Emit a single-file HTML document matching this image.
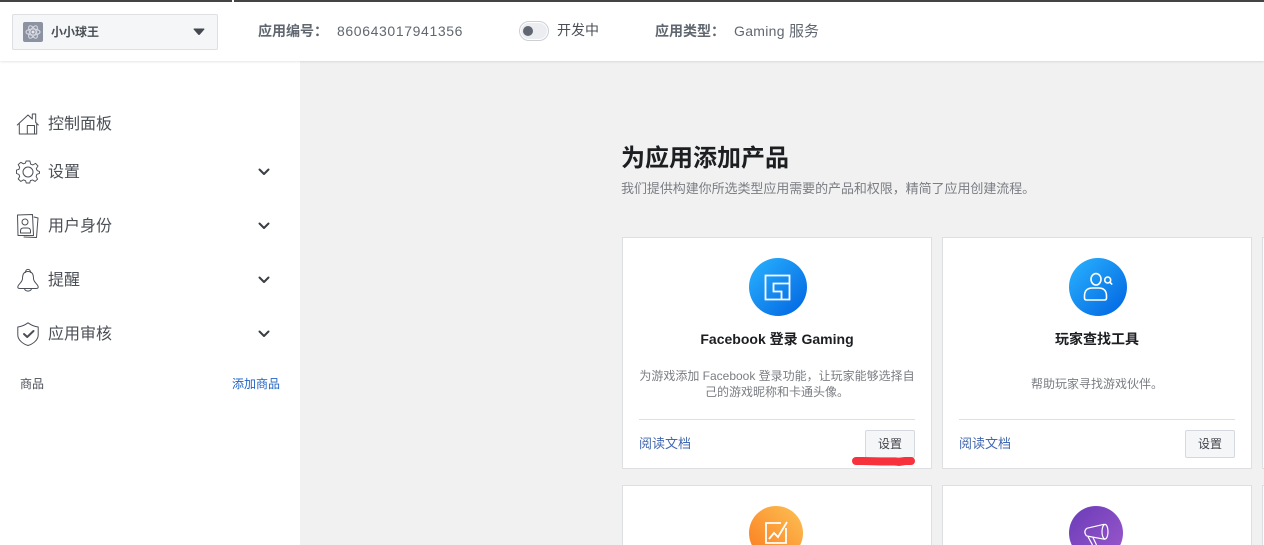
<!DOCTYPE html>
<html lang="zh">
<head>
<meta charset="utf-8">
<title>为应用添加产品</title>
<style>
html,body{margin:0;padding:0;width:1264px;height:545px;overflow:hidden;background:#f1f1f1;font-family:"Liberation Sans","Noto Sans CJK SC",sans-serif;color:#4b4f56}
#wrap{position:relative;width:1264px;height:545px;overflow:hidden;background:#f1f1f1}
.a{position:absolute;white-space:nowrap}
svg{display:block;overflow:visible}
#side{left:0;top:0;width:300px;height:545px;background:#fff}
#hdr{left:0;top:0;width:1264px;height:61px;background:#fff;box-shadow:0 1px 2px rgba(0,0,0,.1)}
.nav{left:48px;font-size:16px;line-height:20px;color:#4b4f56}
.card{position:absolute;box-sizing:border-box;width:310px;background:#fff;border:1px solid #dddfe2}
.card.cut{height:60px;border-bottom:0}
.btn{box-sizing:border-box;width:50px;height:28px;background:#f5f6f7;border:1px solid #d5d8de;border-radius:2px;font-size:12px;line-height:26px;text-align:center;color:#3f4349}
.doc{font-size:13px;line-height:16px;color:#4267b2}
.rule{height:1px;background:#dddfe2;width:276px}
.ttl{font-size:14px;font-weight:bold;line-height:18px;color:#1c1e21;text-align:center}
.desc{font-size:12px;line-height:16px;color:#7a7d83;text-align:center}
.ic{fill:none;stroke:#4b4f56;stroke-width:1;stroke-linecap:round;stroke-linejoin:round}
.chev{fill:none;stroke:#3a3d42;stroke-width:2;stroke-linecap:round;stroke-linejoin:round}
</style>
</head>
<body>
<div id="wrap">
<div class="a" id="side"></div>
<div class="a" id="hdr"></div>
<div class="a" style="left:0;top:0;width:232px;height:2px;background:#444"></div>
<div class="a" style="left:234px;top:0;width:1030px;height:2px;background:#444"></div>

<!-- App selector -->
<div class="a" style="left:12px;top:14px;width:206px;height:36px;box-sizing:border-box;background:#f5f6f7;border:1px solid #dddfe2;border-radius:2px"></div>
<svg class="a" style="left:23px;top:22px" width="20" height="20" viewBox="0 0 20 20">
<rect width="20" height="20" rx="2" fill="#8d92a3"/>
<g fill="none" stroke="#d5d8df" stroke-width="1.1"><ellipse cx="10" cy="10" rx="7" ry="3"/><ellipse cx="10" cy="10" rx="7" ry="3" transform="rotate(60 10 10)"/><ellipse cx="10" cy="10" rx="7" ry="3" transform="rotate(120 10 10)"/></g>
<circle cx="10" cy="10" r="1.5" fill="#e5e7ec"/>
</svg>
<div class="a" style="left:51px;top:23px;font-size:12px;font-weight:bold;line-height:18px;color:#4b4f56">小小球王</div>
<svg class="a" style="left:193px;top:28px" width="12" height="8" viewBox="0 0 12 8"><path d="M0.5 1.2Q0.5 .5 1.3 .5H10.7Q11.5 .5 11.5 1.2L6.8 6.6Q6 7.3 5.2 6.6Z" fill="#444950"/></svg>

<!-- Header info -->
<div class="a" style="left:258px;top:21px;font-size:14px;font-weight:bold;line-height:20px;color:#606770">应用编号：</div>
<div class="a" style="left:337px;top:21px;font-size:14px;line-height:20px;letter-spacing:.62px;color:#606770">860643017941356</div>
<div class="a" style="left:519px;top:21px;width:30px;height:20px;box-sizing:border-box;background:#ebedf0;border:1px solid #ccd0d5;border-radius:10px;box-shadow:inset 0 0 0 1px #fff"></div>
<div class="a" style="left:523px;top:26px;width:10px;height:10px;border-radius:50%;background:#606770"></div>
<div class="a" style="left:557px;top:20px;font-size:14px;line-height:20px;color:#4b4f56">开发中</div>
<div class="a" style="left:655px;top:21px;font-size:14px;font-weight:bold;line-height:20px;color:#606770">应用类型：</div>
<div class="a" style="left:734px;top:21px;font-size:14px;line-height:20px;letter-spacing:.3px;color:#606770">Gaming <span style="font-size:15px;letter-spacing:0">服务</span></div>

<!-- Sidebar nav -->
<svg class="a ic" style="left:16px;top:112px" width="24" height="24" viewBox="0 0 24 24"><path d="M1.3 13 12 3 16.300 7V2H19.700V10.500L22.300 13M3.300 11V22H20.700V11M11.300 22V13.500H18.500V22"/></svg>
<div class="a nav" style="top:115px;left:48px">控制面板</div>

<svg class="a ic" style="left:16px;top:160px" width="24" height="24" viewBox="0 0 24 24"><path d="M10 1H14L14.700 4.200 17 5.200 19.800 3.500 22.400 6.200 20.600 9 21.600 11 24 12 23.900 14 21.200 14.900 20.500 17.200 22 20 19.400 22.300 16.700 20.800 14.500 21.500 13.800 24H10.200L9.400 21.500 7.200 20.700 4.500 22.300 1.800 19.800 3.400 17.100 2.500 15 0 14V10.500L2.600 9.700 3.300 7.500 1.800 4.800 4.500 2.400 7.200 4 9.300 3.200Z" transform="scale(.96) translate(.5 0)"/><circle cx="12" cy="12" r="5"/></svg>
<div class="a nav" style="top:163px">设置</div>
<svg class="a chev" style="left:258px;top:168px" width="12" height="8" viewBox="0 0 12 8"><path d="M1.500 1.500 6 6 10.500 1.500"/></svg>

<svg class="a ic" style="left:17px;top:214px" width="22" height="24" viewBox="0 0 22 24"><path d="M.5 1 15.500 .5 16.500 21.500 1 21.500ZM17 3 21 4 19.500 23.500 7 23"/><circle cx="8" cy="8" r="3"/><path d="M3.500 19V17Q3.500 14 6.500 14H10.500Q13.500 14 13.500 17V19Z"/></svg>
<div class="a nav" style="top:217px">用户身份</div>
<svg class="a chev" style="left:258px;top:222px" width="12" height="8" viewBox="0 0 12 8"><path d="M1.500 1.500 6 6 10.500 1.500"/></svg>

<svg class="a ic" style="left:17px;top:268px" width="22" height="24" viewBox="0 0 22 24"><path d="M11 3.500C6.500 3.500 5.500 7 5.500 10.500 5.500 14 2 15.500 .8 18.500 .5 20 1.500 20.500 3 20.500H19C20.500 20.500 21.500 20 21.200 18.500 20 15.500 16.500 14 16.500 10.500 16.500 7 15.500 3.500 11 3.500ZM8.500 4.500C8.500 .3 13.500 .3 13.500 4.500M7.500 20.500C8 24 14 24 14.500 20.500"/></svg>
<div class="a nav" style="top:271px">提醒</div>
<svg class="a chev" style="left:258px;top:276px" width="12" height="8" viewBox="0 0 12 8"><path d="M1.500 1.500 6 6 10.500 1.500"/></svg>

<svg class="a ic" style="left:17px;top:322px" width="22" height="24" viewBox="0 0 22 24"><path d="M11 .8C8 3 5 4.500 .8 5V13C.8 18 6 22 11 23.500 16 22 21.200 18 21.200 13V5C17 4.500 14 3 11 .8Z"/><path d="M7 12 10.200 15 16.500 9" stroke-width="2"/></svg>
<div class="a nav" style="top:325px">应用审核</div>
<svg class="a chev" style="left:258px;top:330px" width="12" height="8" viewBox="0 0 12 8"><path d="M1.500 1.500 6 6 10.500 1.500"/></svg>

<div class="a" style="left:20px;top:376px;font-size:12px;line-height:16px;color:#4b4f56">商品</div>
<div class="a" style="left:232px;top:376px;font-size:12px;line-height:16px;color:#1f63c6">添加商品</div>

<!-- Heading -->
<div class="a" style="left:621px;top:143px;font-size:24px;font-weight:bold;line-height:32px;color:#1c1e21">为应用添加产品</div>
<div class="a" style="left:621px;top:180px;font-size:13px;line-height:18px;letter-spacing:-.06px;color:#7a7d83">我们提供构建你所选类型应用需要的产品和权限，精简了应用创建流程。</div>

<!-- Card 1 -->
<div class="card" style="left:622px;top:237px;height:232px"></div>
<svg class="a" style="left:749px;top:258px" width="58" height="58" viewBox="0 0 58 58">
<defs>
<linearGradient id="b" x1="0" y1="0" x2="1" y2="1"><stop offset="0" stop-color="#2ab4ff"/><stop offset="1" stop-color="#0062e0"/></linearGradient>
<linearGradient id="o" gradientUnits="userSpaceOnUse" x1="0" y1="54" x2="54" y2="0"><stop offset="0" stop-color="#fb7a1f"/><stop offset="1" stop-color="#fcc254"/></linearGradient>
<linearGradient id="p" gradientUnits="userSpaceOnUse" x1="0" y1="0" x2="54" y2="54"><stop offset="0" stop-color="#6a3cb8"/><stop offset="1" stop-color="#9c58cc"/></linearGradient>
</defs>
<circle cx="29" cy="29" r="29" fill="url(#b)"/>
<path d="M16.500 17.500H40.500V41.500H16.500ZM40.500 25.500H24.500V33.500H32.500V41.500" fill="none" stroke="#fff" stroke-width="1.800"/>
</svg>
<div class="a ttl" style="left:623px;top:330px;width:308px">Facebook 登录 Gaming</div>
<div class="a desc" style="left:623px;top:368px;width:308px">为游戏添加 Facebook 登录功能，让玩家能够选择自<br>己的游戏昵称和卡通头像。</div>
<div class="a rule" style="left:639px;top:419px"></div>
<div class="a doc" style="left:639px;top:436px">阅读文档</div>
<div class="a btn" style="left:865px;top:430px">设置</div>
<svg class="a" style="left:851px;top:456px" width="66" height="10" viewBox="0 0 66 10"><path d="M5 5H12L30 5.500H44L48 6 54 5H60" fill="none" stroke="#f8323c" stroke-width="8" stroke-linecap="round"/></svg>

<!-- Card 2 -->
<div class="card" style="left:942px;top:237px;height:232px"></div>
<svg class="a" style="left:1069px;top:258px" width="58" height="58" viewBox="0 0 58 58">
<circle cx="29" cy="29" r="29" fill="url(#b)"/>
<g fill="none" stroke="#fff" stroke-width="1.600" stroke-linecap="round"><ellipse cx="27" cy="21.300" rx="5" ry="5.700"/><circle cx="38.700" cy="22" r="3"/><path d="M41 24.300 42.700 26"/><path d="M15.500 38Q15.500 30 23.500 30H29.500Q37.500 30 37.500 38V40Q37.500 42 35.500 42H17.500Q15.500 42 15.500 40Z"/></g>
</svg>
<div class="a ttl" style="left:943px;top:330px;width:308px">玩家查找工具</div>
<div class="a desc" style="left:943px;top:376px;width:308px">帮助玩家寻找游戏伙伴。</div>
<div class="a rule" style="left:959px;top:419px"></div>
<div class="a doc" style="left:959px;top:436px">阅读文档</div>
<div class="a btn" style="left:1185px;top:430px">设置</div>

<!-- Card 3 sliver -->
<div class="a" style="left:1262px;top:237px;width:2px;height:232px;box-sizing:border-box;background:#fff;border-left:1px solid #dddfe2;border-top:1px solid #dddfe2;border-bottom:1px solid #dddfe2"></div>

<!-- Row 2 -->
<div class="card cut" style="left:622px;top:485px"></div>
<svg class="a" style="left:749px;top:506px;overflow:hidden" width="54" height="39" viewBox="0 0 54 39">
<circle cx="27" cy="27" r="27" fill="url(#o)"/>
<path d="M32 17H17V37H37V22M20 33 25 27 29 31 38 16" fill="none" stroke="#fff" stroke-width="1.800"/>
</svg>
<div class="card cut" style="left:942px;top:485px"></div>
<svg class="a" style="left:1069px;top:506px;overflow:hidden" width="54" height="39" viewBox="0 0 54 39">
<circle cx="27" cy="27" r="27" fill="url(#p)"/>
<g fill="none" stroke="#fff" stroke-width="1.200" stroke-linejoin="round"><path d="M17.700 22.300 35 18.300M17.700 30 36 33.300M17.700 22.300Q14 26 17.700 30"/><ellipse cx="36" cy="25.700" rx="3" ry="7.300"/><path d="M19 30.700 23.500 39M24 31.500 27.500 39"/></g>
</svg>
<div class="a" style="left:1262px;top:485px;width:2px;height:60px;box-sizing:border-box;background:#fff;border-left:1px solid #dddfe2;border-top:1px solid #dddfe2"></div>
</div>
</body>
</html>
